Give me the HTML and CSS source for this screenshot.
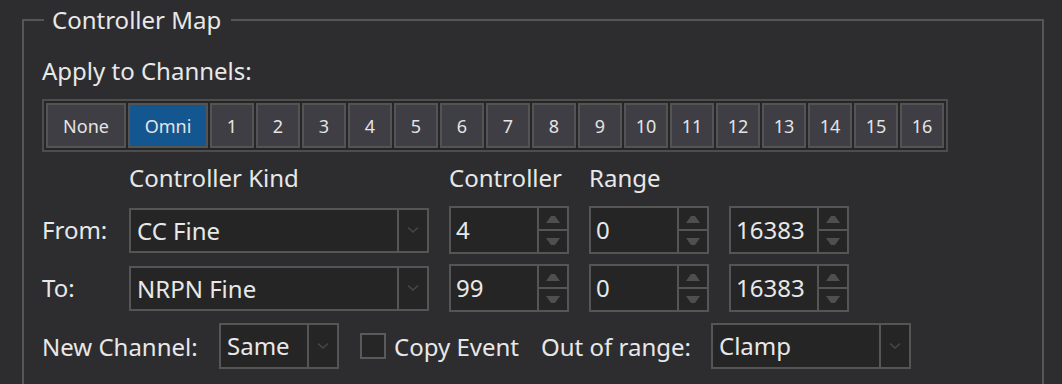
FILE: index.html
```html
<!DOCTYPE html>
<html>
<head>
<meta charset="utf-8">
<link rel="stylesheet" href="styles.css">
</head>
<body>
<fieldset class="group">
  <legend>Controller Map</legend>
  <div class="apply">Apply to Channels:</div>
  <div class="channels">
    <span class="ch wide">None</span>
    <span class="ch wide active">Omni</span>
    <span class="ch">1</span><span class="ch">2</span><span class="ch">3</span><span class="ch">4</span>
    <span class="ch">5</span><span class="ch">6</span><span class="ch">7</span><span class="ch">8</span>
    <span class="ch">9</span><span class="ch">10</span><span class="ch">11</span><span class="ch">12</span>
    <span class="ch">13</span><span class="ch">14</span><span class="ch">15</span><span class="ch">16</span>
  </div>
  <div class="map">
    <span></span>
    <span class="head">Controller Kind</span>
    <span class="head">Controller</span>
    <span class="head">Range</span>
    <span></span>

    <span class="lbl">From:</span>
    <div class="combo"><span class="val">CC Fine</span><span class="drop"><svg width="12" height="8" viewBox="0 0 12 8"><path d="M1 1.5 L6 6 L11 1.5" fill="none" stroke="#474747" stroke-width="1.6"/></svg></span></div>
    <div class="spin"><span class="val">4</span><span class="arrows"><span><svg width="14" height="8" viewBox="0 0 14 8"><path d="M5 1 H9 L14 8 H0 Z" fill="#4f4f4f"/></svg></span><span><svg width="14" height="8" viewBox="0 0 14 8"><path d="M0 0 H14 L9 7 H5 Z" fill="#4f4f4f"/></svg></span></span></div>
    <div class="spin"><span class="val">0</span><span class="arrows"><span><svg width="14" height="8" viewBox="0 0 14 8"><path d="M5 1 H9 L14 8 H0 Z" fill="#4f4f4f"/></svg></span><span><svg width="14" height="8" viewBox="0 0 14 8"><path d="M0 0 H14 L9 7 H5 Z" fill="#4f4f4f"/></svg></span></span></div>
    <div class="spin"><span class="val">16383</span><span class="arrows"><span><svg width="14" height="8" viewBox="0 0 14 8"><path d="M5 1 H9 L14 8 H0 Z" fill="#4f4f4f"/></svg></span><span><svg width="14" height="8" viewBox="0 0 14 8"><path d="M0 0 H14 L9 7 H5 Z" fill="#4f4f4f"/></svg></span></span></div>

    <span class="lbl">To:</span>
    <div class="combo"><span class="val">NRPN Fine</span><span class="drop"><svg width="12" height="8" viewBox="0 0 12 8"><path d="M1 1.5 L6 6 L11 1.5" fill="none" stroke="#474747" stroke-width="1.6"/></svg></span></div>
    <div class="spin"><span class="val">99</span><span class="arrows"><span><svg width="14" height="8" viewBox="0 0 14 8"><path d="M5 1 H9 L14 8 H0 Z" fill="#4f4f4f"/></svg></span><span><svg width="14" height="8" viewBox="0 0 14 8"><path d="M0 0 H14 L9 7 H5 Z" fill="#4f4f4f"/></svg></span></span></div>
    <div class="spin"><span class="val">0</span><span class="arrows"><span><svg width="14" height="8" viewBox="0 0 14 8"><path d="M5 1 H9 L14 8 H0 Z" fill="#4f4f4f"/></svg></span><span><svg width="14" height="8" viewBox="0 0 14 8"><path d="M0 0 H14 L9 7 H5 Z" fill="#4f4f4f"/></svg></span></span></div>
    <div class="spin"><span class="val">16383</span><span class="arrows"><span><svg width="14" height="8" viewBox="0 0 14 8"><path d="M5 1 H9 L14 8 H0 Z" fill="#4f4f4f"/></svg></span><span><svg width="14" height="8" viewBox="0 0 14 8"><path d="M0 0 H14 L9 7 H5 Z" fill="#4f4f4f"/></svg></span></span></div>
  </div>
  <div class="bottom">
    <span class="lbl-new">New Channel:</span>
    <div class="combo small"><span class="val">Same</span><span class="drop"><svg width="12" height="8" viewBox="0 0 12 8"><path d="M1 1.5 L6 6 L11 1.5" fill="none" stroke="#474747" stroke-width="1.6"/></svg></span></div>
    <span class="check"></span>
    <span class="lbl-copy">Copy Event</span>
    <span class="lbl-out">Out of range:</span>
    <div class="combo mid"><span class="val">Clamp</span><span class="drop"><svg width="12" height="8" viewBox="0 0 12 8"><path d="M1 1.5 L6 6 L11 1.5" fill="none" stroke="#474747" stroke-width="1.6"/></svg></span></div>
  </div>
</fieldset>
</body>
</html>
```

FILE: styles.css
```css
* { box-sizing: border-box; }

body {
  margin: 0;
  width: 1062px;
  height: 384px;
  overflow: hidden;
  background: #2d2d30;
  color: #e8e8e8;
  font-family: "Noto Sans", "Open Sans", sans-serif;
  font-size: 24px;
}

.group {
  margin: 8px 18px 0 22px;
  padding: 0 0 0 18px;
  border: 2px solid #555;
  border-bottom: none;
  min-width: 0;
  height: 376px;
}

.group legend {
  margin-left: 2px;
  padding: 0 10px 0 8px;
  line-height: 24px;
}

.apply {
  margin-top: 24px;
  line-height: 30px;
}

.channels {
  margin-top: 13px;
  display: inline-flex;
  gap: 2px;
  padding: 2px;
  border: 2px solid #4d4d4d;
  background: #262626;
}

.ch {
  width: 44px;
  height: 45px;
  border: 2px solid #545454;
  background: #3e3e44;
  color: #e4e4e4;
  font-size: 18px;
  display: flex;
  align-items: center;
  justify-content: center;
}

.ch.wide { width: 80px; }

.ch.active { background: #14568f; }

.map {
  margin-top: 11px;
  display: grid;
  grid-template-columns: 67px 300px 120px 120px 120px;
  grid-template-rows: 33px 48px 48px;
  column-gap: 20px;
  row-gap: 10px;
  align-items: center;
}

.head {
  align-self: start;
  line-height: 30px;
  white-space: nowrap;
}

.lbl { line-height: 30px; }

.combo {
  display: flex;
  height: 45px;
  border: 2px solid #555;
  background: #252526;
}

.combo .val {
  flex: 1;
  padding-left: 6px;
  line-height: 41px;
  white-space: nowrap;
}

.drop {
  width: 30px;
  border-left: 2px solid #555;
  display: flex;
  align-items: center;
  justify-content: center;
}

.spin {
  display: flex;
  height: 48px;
  border: 2px solid #555;
  background: #252526;
}

.spin .val {
  flex: 1;
  padding-left: 5px;
  line-height: 44px;
}

.arrows {
  width: 30px;
  border-left: 2px solid #555;
  display: flex;
  flex-direction: column;
}

.arrows span {
  flex: 1;
  display: flex;
  align-items: center;
  justify-content: center;
}

.arrows span + span { border-top: 2px solid #555; }

.bottom {
  margin-top: 11px;
  height: 46px;
  display: flex;
  align-items: center;
}

.lbl-new { width: 177px; white-space: nowrap; }

.combo.small { width: 120px; height: 46px; }
.combo.mid { width: 200px; height: 46px; }

.check {
  margin-left: 21px;
  width: 26px;
  height: 26px;
  border: 2px solid #5a5a5a;
  background: #262626;
}

.lbl-copy { margin-left: 8px; width: 147px; white-space: nowrap; }

.lbl-out { width: 170px; white-space: nowrap; }
```
